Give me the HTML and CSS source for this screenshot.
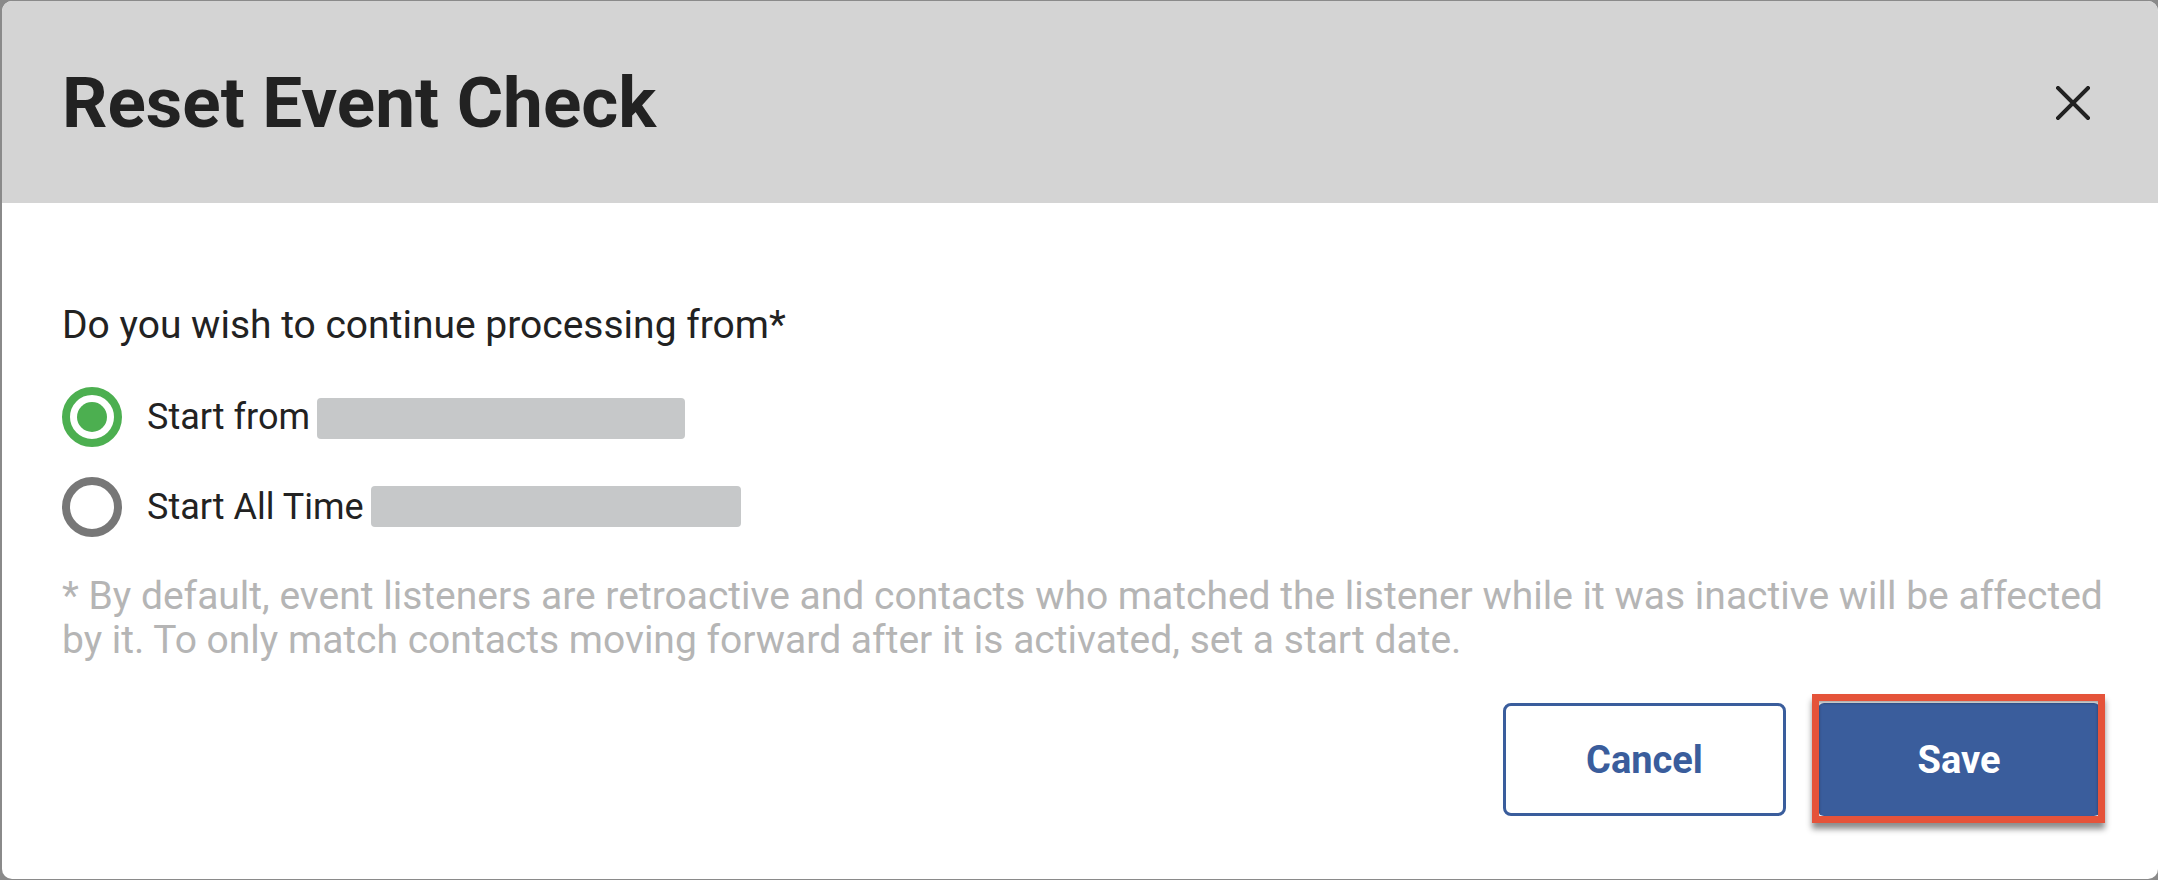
FILE: index.html
```html
<!DOCTYPE html>
<html lang="en">
  <head>
    <meta charset="UTF-8" />
    <meta name="viewport" content="width=device-width, initial-scale=1.0" />
    <title>Reset Event Check</title>
    <link rel="stylesheet" href="styles.css">
  </head>
  <body>
    <div class="modal">
      <div class="modal-header">
        <h1>Reset Event Check</h1>
        <button class="close-btn" aria-label="Close">
          <svg width="34" height="34" viewBox="0 0 34 34">
            <path d="M2 2 L32 32 M32 2 L2 32" stroke="#222" stroke-width="4" stroke-linecap="square" fill="none" />
          </svg>
        </button>
      </div>

      <div class="modal-body">
        <p class="question">Do you wish to continue processing from*</p>

        <div class="options">
          <label class="option">
            <span class="radio checked"></span>
            <span class="option-text">Start from</span>
            <span class="redacted redacted-1"></span>
          </label>
          <label class="option">
            <span class="radio"></span>
            <span class="option-text">Start All Time</span>
            <span class="redacted redacted-2"></span>
          </label>
        </div>

        <p class="note">
          * By default, event listeners are retroactive and contacts who matched the listener while it was inactive will be affected by it. To only match contacts moving forward after it is activated, set a start date.
        </p>

        <div class="actions">
          <button class="btn btn-outline">Cancel</button>
          <button class="btn btn-primary">Save</button>
        </div>
      </div>
    </div>
  </body>
</html>
```

FILE: styles.css
```css
html,
body {
  margin: 0;
  padding: 0;
}
body {
  background-color: #8a8a8a;
  font-family: Roboto, "Liberation Sans", sans-serif;
  color: #222;
  height: 880px;
  overflow: hidden;
}
.modal {
  margin: 1px 0 0 2px;
  height: 878px;
  background-color: #fff;
  border-radius: 10px;
  overflow: hidden;
  display: flex;
  flex-direction: column;
}
.modal-header {
  height: 202px;
  background-color: #d4d4d4;
  display: flex;
  align-items: center;
  justify-content: space-between;
  padding: 0 68px 0 60px;
}
.modal-header h1 {
  margin: 0;
  font-size: 71px;
  font-weight: 700;
  color: #222;
  line-height: 1;
}
.close-btn {
  background: none;
  border: none;
  padding: 0;
  width: 34px;
  height: 34px;
  cursor: pointer;
  margin-top: 2px;
}
.modal-body {
  flex: 1;
  padding: 95px 58px 0 60px;
}
.question {
  margin: 0;
  font-size: 39px;
  line-height: 54px;
}
.options {
  margin-top: 35px;
  display: flex;
  flex-direction: column;
  gap: 30px;
}
.option {
  display: flex;
  align-items: center;
  height: 60px;
  font-size: 36px;
}
.radio {
  width: 60px;
  height: 60px;
  box-sizing: border-box;
  border: 8px solid #777;
  border-radius: 50%;
  display: flex;
  align-items: center;
  justify-content: center;
  margin-right: 25px;
  flex-shrink: 0;
}
.radio.checked {
  border-color: #4caf50;
}
.radio.checked::after {
  content: "";
  width: 30px;
  height: 30px;
  border-radius: 50%;
  background-color: #4caf50;
}
.option-text {
  margin-right: 7px;
}
.redacted {
  height: 41px;
  background-color: #c6c8c9;
  border-radius: 4px;
}
.redacted-1 {
  width: 368px;
  margin-top: 2px;
}
.redacted-2 {
  width: 370px;
  margin-top: -2px;
}
.note {
  margin: 37px -24px 0 0;
  font-size: 39px;
  line-height: 44px;
  color: #b5b5b5;
}
.actions {
  margin-top: 41px;
  display: flex;
  justify-content: flex-end;
  gap: 32px;
}
.btn {
  font-family: Roboto, "Liberation Sans", sans-serif;
  font-size: 38px;
  font-weight: 700;
  width: 283px;
  height: 113px;
  cursor: pointer;
}
.btn-outline {
  background-color: #fff;
  color: #3a5d9c;
  border: 3px solid #3a5d9c;
  border-radius: 8px;
}
.btn-primary {
  position: relative;
  width: 282px;
  background-color: #3a5d9c;
  color: #fff;
  border: none;
  border-radius: 6px;
}
/* annotation frame round the save button */
.btn-primary::after {
  content: "";
  position: absolute;
  top: -9px;
  left: -6px;
  right: -5px;
  bottom: -7px;
  border: 7px solid #e5533a;
  box-shadow: 0 6px 6px rgba(0, 0, 0, 0.45), inset 0 2px 3px rgba(0, 0, 0, 0.35);
}
```
